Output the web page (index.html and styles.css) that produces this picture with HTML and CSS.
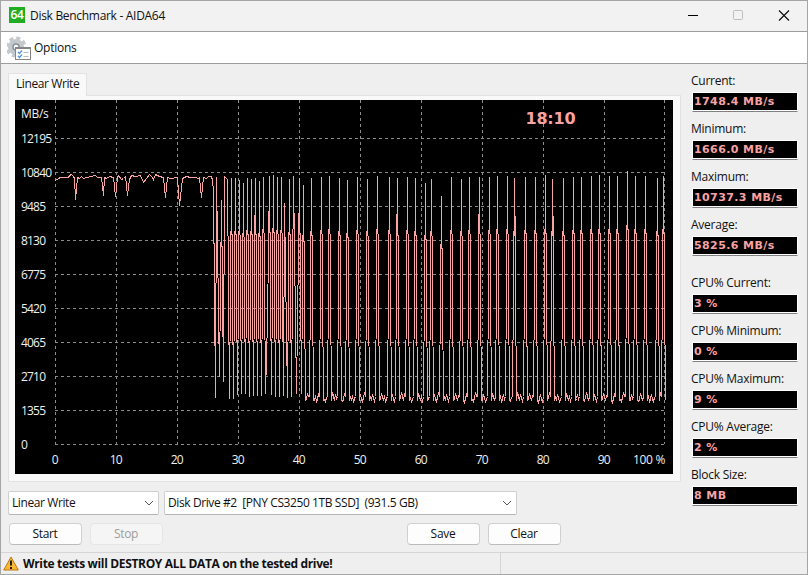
FILE: index.html
```html
<!DOCTYPE html>
<html lang="en">
<head>
    <meta charset="UTF-8">
    <meta name="viewport" content="width=device-width, initial-scale=1.0">
    <title>Disk Benchmark - AIDA64</title>
    <link rel="stylesheet" href="styles.css">
</head>
<body>
    <div class="window">
        <header class="titlebar">
            <span class="app-icon">64</span>
            <span class="title">Disk Benchmark - AIDA64</span>
            <svg class="window-buttons" width="110" height="30" viewBox="0 0 110 30">
                <path d="M1 14.5h10" stroke="#000"/>
                <rect x="46.500" y="9.500" width="9" height="9" rx="1" fill="none" stroke="#bdbdbd"/>
                <path d="M92 9.500l10 10M102 9.500l-10 10" stroke="#111" stroke-width="1.200"/>
            </svg>
        </header>

        <nav class="toolbar">
            <svg width="24" height="24" viewBox="0 0 24 24">
                <g fill="none" stroke="#c3c8cc">
                    <circle cx="9" cy="11" r="9" stroke-width="3" stroke-dasharray="4 3.070"/>
                    <circle cx="9" cy="11" r="5.500" stroke-width="5"/>
                    <circle cx="9" cy="11" r="3" stroke="#8b9298" stroke-width="1.500"/>
                </g>
                <rect x="8.500" y="11.500" width="15" height="12" fill="#fff" stroke="#858585"/>
                <path d="M8 12h16" stroke="#858585" stroke-width="2"/>
                <path d="M11 16l1.500 1.500 2.500-3M11 20l1.500 1.500 2.500-3" fill="none" stroke="#4a90e0" stroke-width="1.200"/>
                <path d="M16.500 16.500h5M16.500 20.500h5" stroke="#b5bcc2"/>
            </svg>
            <span>Options</span>
        </nav>

        <main class="content">
            <section class="left">
                <div class="tab">Linear Write</div>
                <div class="panel">
                    <svg id="chart" width="658" height="374" viewBox="15 100 658 374"></svg>
                </div>
                <div class="selects">
                    <div class="select mode">Linear Write
                        <svg width="10" height="6" viewBox="0 0 10 6"><path d="M1 1l4 4 4-4"/></svg>
                    </div>
                    <div class="select drive"><span>Disk Drive #2&nbsp; [PNY CS3250 1TB SSD]&nbsp; (931.5 GB)</span>
                        <svg width="10" height="6" viewBox="0 0 10 6"><path d="M1 1l4 4 4-4"/></svg>
                    </div>
                </div>
                <div class="buttons">
                    <button>Start</button>
                    <button disabled>Stop</button>
                    <button class="save">Save</button>
                    <button>Clear</button>
                </div>
            </section>

            <aside class="stats">
                <div class="stat"><label>Current:</label><output>1748.4 MB/s</output></div>
                <div class="stat"><label>Minimum:</label><output>1666.0 MB/s</output></div>
                <div class="stat"><label>Maximum:</label><output>10737.3 MB/s</output></div>
                <div class="stat"><label>Average:</label><output>5825.6 MB/s</output></div>
                <div class="stat cpu"><label>CPU% Current:</label><output>3 %</output></div>
                <div class="stat"><label>CPU% Minimum:</label><output>0 %</output></div>
                <div class="stat"><label>CPU% Maximum:</label><output>9 %</output></div>
                <div class="stat"><label>CPU% Average:</label><output>2 %</output></div>
                <div class="stat"><label>Block Size:</label><output>8 MB</output></div>
            </aside>
        </main>

        <footer class="statusbar">
            <div class="message">
                <svg width="16" height="15" viewBox="0 0 16 15">
                    <path d="M8 1L15.300 14H.7z" fill="#fdb833" stroke="#b87718" stroke-linejoin="round"/>
                    <path d="M8 4.500v5M8 11v2" stroke="#222" stroke-width="2"/>
                </svg>
                <strong>Write tests will DESTROY ALL DATA on the tested drive!</strong>
            </div>
        </footer>
    </div>
    <script src="chart.js"></script>
</body>
</html>
```
FILE: styles.css
```css
* {
    box-sizing: border-box;
}

body {
    margin: 0;
    font-family: "Open Sans", "Noto Sans", sans-serif;
    font-size: 12px;
    letter-spacing: -0.3px;
    color: #111;
    background-color: #efefef;
}

.window {
    display: flex;
    flex-direction: column;
    width: 808px;
    height: 575px;
    border: 1px solid #a5a5a5;
    background-color: #efefef;
    overflow: hidden;
}

.titlebar {
    display: flex;
    align-items: center;
    height: 31px;
    padding-left: 8px;
    background-color: #f2f2f2;
    border-bottom: 1px solid #9c9c9c;
}

.app-icon {
    width: 16px;
    height: 16px;
    margin-bottom: 2px;
    background-color: #21ad21;
    color: white;
    font-weight: 600;
    font-size: 12px;
    line-height: 16px;
    text-align: center;
}

.title {
    margin-left: 5px;
    margin-bottom: 1px;
}

.window-buttons {
    margin-left: auto;
    margin-right: 10px;
}

.toolbar {
    display: flex;
    align-items: center;
    height: 32px;
    padding-left: 6px;
    gap: 3px;
    background-color: white;
    border-bottom: 1px solid #9c9c9c;
}

.toolbar span {
    letter-spacing: -0.25px;
}

.content {
    display: flex;
    height: 488px;
    padding-left: 7px;
}

.left {
    width: 673px;
    padding-top: 9px;
}

.tab {
    position: relative;
    z-index: 1;
    width: 79px;
    height: 23px;
    padding-left: 7px;
    line-height: 20px;
    letter-spacing: -0.4px;
    background-color: #f9f9f9;
    border: 1px solid #e2e2e2;
    border-bottom: none;
}

.panel {
    height: 387px;
    margin-top: -1px;
    padding: 4px 6px;
    background-color: #f9f9f9;
    border: 1px solid #e2e2e2;
}

#chart {
    display: block;
    background-color: black;
}

.selects {
    display: flex;
    gap: 5px;
    margin-top: 9px;
}

.select {
    display: flex;
    align-items: center;
    justify-content: space-between;
    height: 24px;
    padding: 0 4px 1px 3px;
    letter-spacing: -0.4px;
    background-color: white;
    border: 1px solid #cfcfcf;
    border-bottom-color: #b5b5b5;
    border-radius: 2px;
}

.select path {
    fill: none;
    stroke: #555;
}

.mode {
    width: 151px;
}

.drive {
    width: 353px;
}

.buttons {
    display: flex;
    gap: 8px;
    margin: 8px 0 0 1px;
}

button {
    width: 73px;
    height: 22px;
    padding: 0 1px 1px 0;
    font: inherit;
    letter-spacing: inherit;
    color: #111;
    background-color: #fdfdfd;
    border: 1px solid #d0d0d0;
    border-bottom-color: #bbb;
    border-radius: 4px;
}

button:disabled {
    color: #9c9c9c;
    background-color: #f5f5f5;
    border-color: #e5e5e5;
}

.save {
    margin-left: 236px;
}

.stats {
    padding: 8px 0 0 10px;
}

.stat {
    width: 107px;
    height: 48px;
}

.stat.cpu {
    margin-top: 10px;
}

.stat label {
    display: block;
    height: 20px;
    line-height: 18px;
    letter-spacing: -0.25px;
}

.stat output {
    display: block;
    height: 20px;
    padding-left: 1px;
    margin-left: 1px;
    background-color: black;
    color: #f9a3a3;
    border: 1px solid white;
    border-bottom: 1px solid #808080;
    box-shadow: inset 0 -1px white;
    font: bold 11px/17px "DejaVu Sans", sans-serif;
    letter-spacing: 0.4px;
}

.statusbar {
    height: 22px;
    border-top: 1px solid #d5d5d5;
}

.message {
    display: flex;
    align-items: center;
    gap: 4px;
    width: 500px;
    height: 21px;
    padding-left: 2px;
    letter-spacing: -0.34px;
    border-right: 1px solid #d5d5d5;
}

.grid {
    fill: none;
    stroke: #8c8c8c;
    stroke-dasharray: 3 3;
    shape-rendering: crispEdges;
}

.trace {
    fill: none;
    stroke: #f9a3a3;
    shape-rendering: crispEdges;
}

.axis {
    fill: #f0f0f0;
    letter-spacing: -0.8px;
}

.unit {
    letter-spacing: -0.3px;
}

.middle {
    text-anchor: middle;
}

.clock {
    fill: #f9a3a3;
    font: bold 16px "DejaVu Sans", sans-serif;
    letter-spacing: -0.2px;
}
```
FILE: chart.js
```javascript
const chart = document.getElementById('chart');

// 0 - 40% of the drive
const points = [
    [55,180],[58,178],[60,177],[68,177],[69,175],[71,174],[73,176],[74,178],[75,199],[77,177],
    [79,178],[81,176],[83,178],[86,177],[95,175],[97,177],[101,177],[103,195],[104,177],[106,178],
    [109,176],[113,177],[115,196],[117,177],[118,175],[121,179],[123,178],[125,176],[127,195],[129,179],
    [131,175],[135,176],[140,175],[143,182],[146,178],[149,174],[152,177],[153,179],[155,174],[159,176],
    [163,177],[165,197],[167,177],[170,178],[177,177],[179,205],[181,187],[182,178],[186,176],[190,177],
    [195,177],[198,178],[199,177],[201,197],[203,177],[206,178],[208,176],[211,176],[212,180],[213,190],
    [215,397],[216,177],[219,376],[221,200],[223,381],[224,176],[227,179],[229,398],[231,178],[233,398],
    [235,178],[237,394],[239,180],[241,393],[243,183],[245,393],[247,178],[249,396],[251,179],[253,395],
    [255,178],[257,395],[259,181],[261,395],[263,177],[265,393],[267,320],[269,176],[271,394],[273,175],
    [275,396],[277,177],[279,396],[281,177],[283,395],[284,203],[287,397],[289,179],[291,396],[293,176],
    [296,393],[299,178],[301,393],[303,185],[305,400]
];

// after the cache is full: one short peak every few samples
const peaks = [
    [311,178],[321,177],[329,176],[339,178],[347,180],[357,177],[367,179],[377,176],[389,177],[397,178],
    [407,177],[415,178],[425,183],[431,179],[441,196],[451,177],[461,179],[469,177],[479,177],[489,177],
    [497,176],[507,176],[514,178],[525,177],[535,177],[545,175],[552,179],[563,178],[573,177],[581,177],
    [591,176],[599,175],[609,176],[617,176],[627,171],[635,176],[645,176],[657,178],[663,176]
];
const noise = [399, 393, 396, 400, 395, 402, 398, 394, 399, 401, 397, 392, 396, 400, 394, 398, 401];

// samples that fall on two pixel columns: x, top, bottom
const wide = [
    [217,211,277],[254,215,280],[376,231,284],[396,214,233],[414,232,289],
    [478,214,233],[515,216,288],[534,232,288],[553,216,288]
];

let n = 0;
let x = 306;
peaks.forEach(function(peak) {
    for (; x < peak[0] - 2; x++) {
        points.push([x, noise[n++ % noise.length]]);
    }
    points.push([peak[0] - 2, 396], peak, [peak[0] + 2, 400]);
    x = peak[0] + 3;
});

let svg = '';
for (let i = 0; i <= 10; i++) {
    const gx = i === 10 ? 664.5 : 55.5 + i * 61;
    svg += `<path class="grid" d="M${gx} 100V444"/>`;
    if (i < 10) {
        const gy = 444.5 - i * 34;
        svg += `<path class="grid" d="M55 ${gy}H665"/>`;
        svg += `<text class="axis" x="21" y="${gy + 4}">${i * 1355}</text>`;
        svg += `<text class="axis middle" x="${gx - 0.8}" y="464">${i * 10}</text>`;
    }
}
svg += '<text class="axis unit" x="21" y="118">MB/s</text>';
svg += '<text class="axis unit" x="633" y="464">100 %</text>';
svg += '<text class="clock" x="525.5" y="124">18:10</text>';
svg += `<polyline class="trace" points="${points.map(p => (p[0] + 0.5) + ',' + (p[1] + 0.5)).join(' ')}"/>`;
wide.forEach(function(w) {
    svg += `<path class="trace" d="M${w[0] + 0.5} ${w[1]}V${w[2]}"/>`;
});
chart.innerHTML = svg;
```
